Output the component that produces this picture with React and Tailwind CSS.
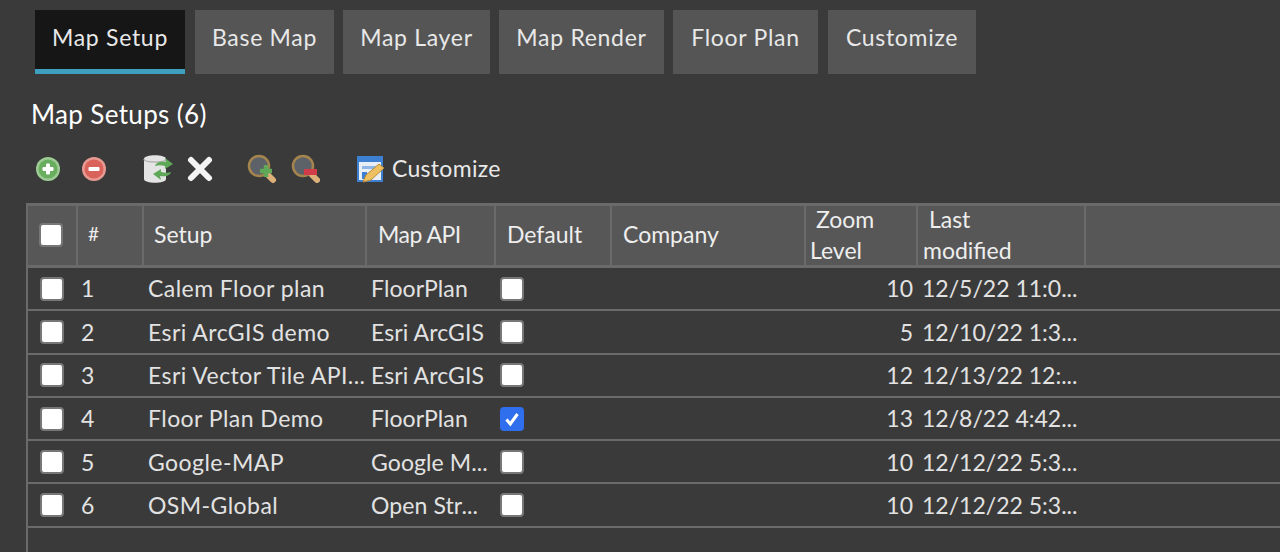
import { useState } from "react";

const tabs = [
  { label: "Map Setup", w: "w-[150px]", active: true },
  { label: "Base Map", w: "ml-[1px] w-[139px]" },
  { label: "Map Layer", w: "w-[147px]" },
  { label: "Map Render", w: "w-[165px]" },
  { label: "Floor Plan", w: "w-[145px]" },
  { label: "Customize", w: "ml-[1px] w-[148px]" },
];

const rows = [
  { n: 1, setup: "Calem Floor plan", api: "FloorPlan", zoom: 10, date: "12/5/22 11:0..." },
  { n: 2, setup: "Esri ArcGIS demo", api: "Esri ArcGIS", zoom: 5, date: "12/10/22 1:3..." },
  { n: 3, setup: "Esri Vector Tile API...", api: "Esri ArcGIS", zoom: 12, date: "12/13/22 12:..." },
  { n: 4, setup: "Floor Plan Demo", api: "FloorPlan", zoom: 13, date: "12/8/22 4:42...", def: true },
  { n: 5, setup: "Google-MAP", api: "Google M...", zoom: 10, date: "12/12/22 5:3..." },
  { n: 6, setup: "OSM-Global", api: "Open Str...", zoom: 10, date: "12/12/22 5:3..." },
];

const Check = ({ on }) => (
  <span className={`flex h-[24px] w-[24px] shrink-0 items-center justify-center rounded-[4px] border-2 ${on ? "border-[#2f6fed] bg-[#2f6fed]" : "border-[#777] bg-white"}`}>
    {on && (
      <svg width="16" height="16" viewBox="0 0 16 16">
        <path d="M2.5 8.5 6.3 13 13.5 3" fill="none" stroke="#fff" strokeWidth="3" />
      </svg>
    )}
  </span>
);

const Round = ({ color, edge, minus }) => (
  <svg width="26" height="26" viewBox="0 0 26 26" className="shrink-0 blur-[0.5px]">
    <circle cx="13" cy="13" r="12" fill={edge} />
    <circle cx="13" cy="13" r="9.5" fill={color} />
    <rect x="7.5" y="11" width="11" height="4" rx="1" fill="#fff" />
    {!minus && <rect x="11" y="7.5" width="4" height="11" rx="1" fill="#fff" />}
  </svg>
);

const Lens = ({ minus }) => (
  <svg width="30" height="30" viewBox="0 0 30 30" className="shrink-0 blur-[0.5px]">
    <path d="M21 21 26 26" stroke="#dcb078" strokeWidth="6" strokeLinecap="round" />
    <circle cx="12" cy="12" r="10" fill="#5c6268" stroke="#a5854d" strokeWidth="2.5" />
    {minus ? (
      <rect x="13" y="15" width="13" height="6" fill="#d23c48" />
    ) : (
      <path d="M19 11v12M13 17h12" stroke="#5fa858" strokeWidth="4.5" />
    )}
  </svg>
);

const Header = ({ w, children, pl = "pl-[11px]", leading = false }) => (
  <div className={`${w} ${pl} flex h-full shrink-0 items-center border-r-2 border-[#6a6a6a] pb-[2px] ${leading ? "leading-[31px]" : ""}`}>
    {children}
  </div>
);

export default function App() {
  const [active] = useState("Map Setup");
  return (
    <div className="h-[552px] w-[1280px] overflow-hidden bg-[#3a3a3a] font-['Lato',sans-serif] text-[23px] text-[#e8e8e8]">
      <div className="flex gap-[9px] pl-[35px] pt-[10px] tracking-[0.7px]">
        {tabs.map((t) => (
          <div
            key={t.label}
            className={`flex h-[64px] items-center justify-center ${t.w} ${active === t.label ? "border-b-[5px] border-[#3f9fbf] bg-[#161616] pb-[5px]" : "bg-[#555555] pb-[10px]"}`}
          >
            {t.label}
          </div>
        ))}
      </div>

      <div className="pl-[31px] pt-[22px] text-[26px] leading-[36px] tracking-[0.35px] text-white">Map Setups (6)</div>

      <div className="mt-[17px] flex h-[40px] items-center pl-[35px]">
        <Round color="#69ad5f" edge="#9ccb94" />
        <span className="ml-[20px]"><Round color="#d9625a" edge="#e89a92" minus /></span>
        <svg width="34" height="30" viewBox="0 0 34 30" className="ml-[35px] shrink-0 blur-[0.5px]">
          <path d="M2 5c0-5 22-5 22 0v20c0 5-22 5-22 0z" fill="#e4e4e4" />
          <path d="M2 5c0 4 22 4 22 0" fill="none" stroke="#b5b5b5" strokeWidth="1.5" />
          <path d="M13 12c1-4 6-5 11-4l-1-4 8 6-8 5 0-3c-4-1-7-1-10 0zM29 18c-1 4-6 5-11 4l1 4-8-6 8-5 0 3c4 1 7 1 10 0z" fill="#5fa858" />
        </svg>
        <svg width="26" height="26" viewBox="0 0 26 26" className="ml-[11px] shrink-0 blur-[0.5px]">
          <path d="M4 4 22 22M22 4 4 22" stroke="#f4f4f4" strokeWidth="6" strokeLinecap="round" />
        </svg>
        <span className="ml-[34px]"><Lens /></span>
        <span className="ml-[14px]"><Lens minus /></span>
        <svg width="28" height="28" viewBox="0 0 28 28" className="ml-[36px] shrink-0 blur-[0.5px]">
          <rect x="1" y="2" width="24" height="24" fill="#e8eef6" stroke="#3d7fd0" strokeWidth="2" />
          <rect x="1" y="2" width="24" height="5" fill="#3d7fd0" />
          <rect x="5" y="11" width="14" height="3" fill="#8fb8e6" />
          <rect x="5" y="17" width="5" height="7" fill="#3d7fd0" />
          <path d="M6 27 9 20 22 9 27 13 14 25z" fill="#eec060" stroke="#b88a38" />
        </svg>
        <span className="mb-[2px] ml-[7px] tracking-[0.3px]">Customize</span>
      </div>

      <div className="ml-[26px] mt-[14px] h-[349px] border-l-2 border-[#6a6a6a]">
        <div className="flex h-[65px] items-center border-y-[3px] border-[#6a6a6a] bg-[#575757] text-[#eeeeee]">
          <Header w="w-[50px]"><Check /></Header>
          <Header w="w-[66px]" pl="pl-[10px]"><span className="text-[19px]">#</span></Header>
          <Header w="w-[223px]" pl="pl-[10px]">Setup</Header>
          <Header w="w-[129px]"><span className="tracking-[-0.5px]">Map API</span></Header>
          <Header w="w-[116px]">Default</Header>
          <Header w="w-[194px]">Company</Header>
          <Header w="w-[112px]" pl="pl-[4px]" leading><span>&nbsp;Zoom<br />Level</span></Header>
          <Header w="w-[168px]" pl="pl-[5px]" leading><span>&nbsp;Last<br />modified</span></Header>
        </div>
        {rows.map((r) => (
          <div key={r.n} className="flex h-[43.3px] items-center border-b-2 border-[#6a6a6a] text-[#e2e2e2]">
            <div className="w-[50px] shrink-0 pl-[12px]"><Check /></div>
            <div className="w-[66px] shrink-0 pl-[3px]">{r.n}</div>
            <div className="w-[223px] shrink-0 whitespace-nowrap pl-[4px] tracking-[0.45px]">{r.setup}</div>
            <div className="w-[129px] shrink-0 whitespace-nowrap pl-[4px] tracking-[0.1px]">{r.api}</div>
            <div className="w-[116px] shrink-0 pl-[4px]"><Check on={r.def} /></div>
            <div className="w-[194px] shrink-0" />
            <div className="w-[112px] shrink-0 pr-[5px] text-right">{r.zoom}</div>
            <div className="w-[168px] shrink-0 whitespace-nowrap pl-[4px]">{r.date}</div>
          </div>
        ))}
      </div>
    </div>
  );
}
